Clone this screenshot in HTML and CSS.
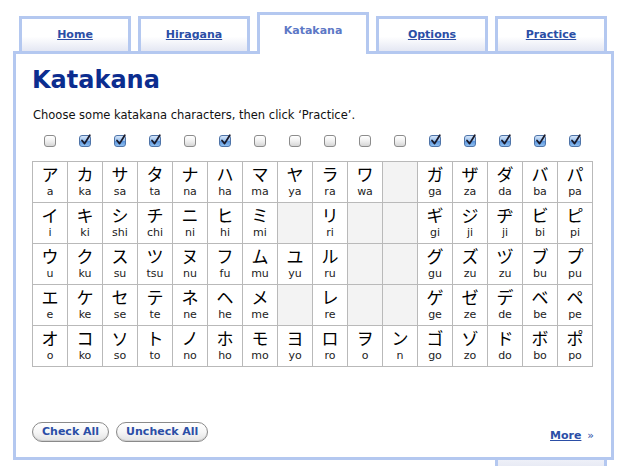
FILE: index.html
```html
<!DOCTYPE html>
<html>
<head>
<meta charset="utf-8">
<link rel="stylesheet" href="styles.css">
</head>
<body>
<nav class="tabs">
  <div class="tab"><a href="#">Home</a></div>
  <div class="tab"><a href="#">Hiragana</a></div>
  <div class="tab active"><span>Katakana</span></div>
  <div class="tab"><a href="#">Options</a></div>
  <div class="tab"><a href="#">Practice</a></div>
</nav>
<main class="panel">
  <h1 class="title">Katakana</h1>
  <p class="intro">Choose some katakana characters, then click ‘Practice’.</p>
  <div class="checks">
    <span class="cb"></span>
    <span class="cb on"><svg viewBox="0 0 13 13"><path d="M3 6.5 L5.6 9.6 L10.8 1.2"/></svg></span>
    <span class="cb on"><svg viewBox="0 0 13 13"><path d="M3 6.5 L5.6 9.6 L10.8 1.2"/></svg></span>
    <span class="cb on"><svg viewBox="0 0 13 13"><path d="M3 6.5 L5.6 9.6 L10.8 1.2"/></svg></span>
    <span class="cb"></span>
    <span class="cb on"><svg viewBox="0 0 13 13"><path d="M3 6.5 L5.6 9.6 L10.8 1.2"/></svg></span>
    <span class="cb"></span>
    <span class="cb"></span>
    <span class="cb"></span>
    <span class="cb"></span>
    <span class="cb"></span>
    <span class="cb on"><svg viewBox="0 0 13 13"><path d="M3 6.5 L5.6 9.6 L10.8 1.2"/></svg></span>
    <span class="cb on"><svg viewBox="0 0 13 13"><path d="M3 6.5 L5.6 9.6 L10.8 1.2"/></svg></span>
    <span class="cb on"><svg viewBox="0 0 13 13"><path d="M3 6.5 L5.6 9.6 L10.8 1.2"/></svg></span>
    <span class="cb on"><svg viewBox="0 0 13 13"><path d="M3 6.5 L5.6 9.6 L10.8 1.2"/></svg></span>
    <span class="cb on"><svg viewBox="0 0 13 13"><path d="M3 6.5 L5.6 9.6 L10.8 1.2"/></svg></span>
  </div>
  <table class="kana">
    <tr>
      <td><b>ア</b><i>a</i></td><td><b>カ</b><i>ka</i></td><td><b>サ</b><i>sa</i></td><td><b>タ</b><i>ta</i></td><td><b>ナ</b><i>na</i></td><td><b>ハ</b><i>ha</i></td><td><b>マ</b><i>ma</i></td><td><b>ヤ</b><i>ya</i></td><td><b>ラ</b><i>ra</i></td><td><b>ワ</b><i>wa</i></td><td class="empty"></td><td><b>ガ</b><i>ga</i></td><td><b>ザ</b><i>za</i></td><td><b>ダ</b><i>da</i></td><td><b>バ</b><i>ba</i></td><td><b>パ</b><i>pa</i></td>
    </tr>
    <tr>
      <td><b>イ</b><i>i</i></td><td><b>キ</b><i>ki</i></td><td><b>シ</b><i>shi</i></td><td><b>チ</b><i>chi</i></td><td><b>ニ</b><i>ni</i></td><td><b>ヒ</b><i>hi</i></td><td><b>ミ</b><i>mi</i></td><td class="empty"></td><td><b>リ</b><i>ri</i></td><td class="empty"></td><td class="empty"></td><td><b>ギ</b><i>gi</i></td><td><b>ジ</b><i>ji</i></td><td><b>ヂ</b><i>ji</i></td><td><b>ビ</b><i>bi</i></td><td><b>ピ</b><i>pi</i></td>
    </tr>
    <tr>
      <td><b>ウ</b><i>u</i></td><td><b>ク</b><i>ku</i></td><td><b>ス</b><i>su</i></td><td><b>ツ</b><i>tsu</i></td><td><b>ヌ</b><i>nu</i></td><td><b>フ</b><i>fu</i></td><td><b>ム</b><i>mu</i></td><td><b>ユ</b><i>yu</i></td><td><b>ル</b><i>ru</i></td><td class="empty"></td><td class="empty"></td><td><b>グ</b><i>gu</i></td><td><b>ズ</b><i>zu</i></td><td><b>ヅ</b><i>zu</i></td><td><b>ブ</b><i>bu</i></td><td><b>プ</b><i>pu</i></td>
    </tr>
    <tr>
      <td><b>エ</b><i>e</i></td><td><b>ケ</b><i>ke</i></td><td><b>セ</b><i>se</i></td><td><b>テ</b><i>te</i></td><td><b>ネ</b><i>ne</i></td><td><b>ヘ</b><i>he</i></td><td><b>メ</b><i>me</i></td><td class="empty"></td><td><b>レ</b><i>re</i></td><td class="empty"></td><td class="empty"></td><td><b>ゲ</b><i>ge</i></td><td><b>ゼ</b><i>ze</i></td><td><b>デ</b><i>de</i></td><td><b>ベ</b><i>be</i></td><td><b>ペ</b><i>pe</i></td>
    </tr>
    <tr>
      <td><b>オ</b><i>o</i></td><td><b>コ</b><i>ko</i></td><td><b>ソ</b><i>so</i></td><td><b>ト</b><i>to</i></td><td><b>ノ</b><i>no</i></td><td><b>ホ</b><i>ho</i></td><td><b>モ</b><i>mo</i></td><td><b>ヨ</b><i>yo</i></td><td><b>ロ</b><i>ro</i></td><td><b>ヲ</b><i>o</i></td><td><b>ン</b><i>n</i></td><td><b>ゴ</b><i>go</i></td><td><b>ゾ</b><i>zo</i></td><td><b>ド</b><i>do</i></td><td><b>ボ</b><i>bo</i></td><td><b>ポ</b><i>po</i></td>
    </tr>
  </table>
  <div class="footer">
    <div class="buttons">
      <button class="btn" type="button">Check All</button>
      <button class="btn" type="button">Uncheck All</button>
    </div>
    <div class="more"><a href="#">More</a> <span class="raquo">»</span></div>
  </div>
</main>
<div class="bottom-tab"></div>
</body>
</html>
```

FILE: styles.css
```css
html, body {
  margin: 0;
  padding: 0;
  background: #fff;
}
body {
  font-family: "DejaVu Sans", Verdana, sans-serif;
  font-size: 11px;
  color: #111;
  width: 627px;
  height: 466px;
  overflow: hidden;
}
a {
  color: #2b4ea6;
}
.tabs {
  display: flex;
  align-items: flex-end;
  gap: 7px;
  padding: 12px 0 0 19px;
  height: 39px;
  box-sizing: content-box;
  position: relative;
  z-index: 2;
}
.tab {
  box-sizing: border-box;
  width: 112px;
  height: 35px;
  border: 3px solid #b4c8f0;
  border-bottom: none;
  background: linear-gradient(to bottom, #ffffff 0%, #ffffff 55%, #e4e7f3 100%);
  text-align: center;
  padding-top: 9px;
  line-height: 14px;
  font-weight: bold;
  font-size: 11px;
}
.tab a {
  color: #2b4ea6;
  text-decoration: underline;
}
.tab.active {
  height: 42px;
  margin-bottom: -3px;
  background: #fff;
}
.tab.active span {
  color: #5d78c6;
}
.panel {
  position: relative;
  z-index: 1;
  box-sizing: border-box;
  margin-left: 13px;
  width: 601px;
  height: 409px;
  border: 3px solid #b4c8f0;
  background: #fff;
  padding: 12px 16px 0 16px;
  display: flex;
  flex-direction: column;
}
.title {
  margin: 0;
  font-size: 24px;
  line-height: 28px;
  font-weight: bold;
  color: #0c2d8f;
}
.intro {
  margin: 14px 0 0 1px;
  line-height: 14px;
  font-size: 11.5px;
  color: #111;
}
.checks {
  display: grid;
  grid-template-columns: repeat(16, 35px);
  margin-top: 12px;
  height: 14px;
  justify-items: center;
  align-items: center;
}
.cb {
  box-sizing: border-box;
  width: 12px;
  height: 12px;
  border: 1px solid #8c8c8c;
  border-radius: 3px;
  background: linear-gradient(to bottom, #ffffff 0%, #f0f0f0 50%, #d6d6d6 100%);
  position: relative;
  display: block;
}
.cb.on {
  border-color: #4f74a8;
  background: linear-gradient(to bottom, #d6e6fa 0%, #9cc2ee 45%, #5e97dd 55%, #8fc0f2 100%);
}
.cb svg {
  position: absolute;
  left: -1px;
  top: -2px;
  width: 13px;
  height: 13px;
  overflow: visible;
}
.cb svg path {
  fill: none;
  stroke: #1a1a2a;
  stroke-width: 1.8;
  stroke-linecap: round;
  stroke-linejoin: round;
}
.kana {
  margin-top: 13px;
  border-collapse: collapse;
  table-layout: fixed;
  width: 561px;
}
.kana td {
  border: 1px solid #b9b9b9;
  width: 34px;
  height: 40px;
  padding: 0;
  text-align: center;
  vertical-align: top;
}
.kana td.empty {
  background: #f3f3f3;
}
.kana b {
  display: block;
  font-family: "Noto Sans CJK JP", sans-serif;
  font-weight: normal;
  font-size: 17px;
  line-height: 20px;
  margin-top: 2px;
  color: #000;
}
.kana i {
  display: block;
  font-style: normal;
  font-family: "DejaVu Sans", Verdana, sans-serif;
  font-size: 11px;
  line-height: 13px;
  margin-top: 1px;
  color: #222;
}
.footer {
  margin-top: auto;
  margin-bottom: 15px;
  display: flex;
  justify-content: space-between;
  align-items: flex-end;
}
.buttons {
  display: flex;
  gap: 7px;
}
.btn {
  font-family: "DejaVu Sans", Verdana, sans-serif;
  font-size: 11px;
  font-weight: bold;
  color: #2b4ea6;
  height: 20px;
  padding: 0 9px;
  border: 1px solid #8a8a8a;
  border-radius: 10px;
  background: linear-gradient(to bottom, #ffffff 0%, #f6f6f6 50%, #e2e2e2 100%);
  box-shadow: inset 0 -1px 0 #cfcfcf;
  line-height: 18px;
}
.more {
  font-weight: bold;
  font-size: 11px;
  line-height: 14px;
  margin-right: 1px;
  margin-bottom: -1px;
}
.more a {
  color: #2b4ea6;
}
.raquo {
  color: #2b4ea6;
  font-weight: normal;
  margin-left: 2px;
}
.bottom-tab {
  margin-left: 495px;
  width: 112px;
  height: 10px;
  box-sizing: border-box;
  border-left: 3px solid #b4c8f0;
  border-right: 3px solid #b4c8f0;
  background: linear-gradient(to bottom, #eef0f8, #e4e7f3);
}
```
